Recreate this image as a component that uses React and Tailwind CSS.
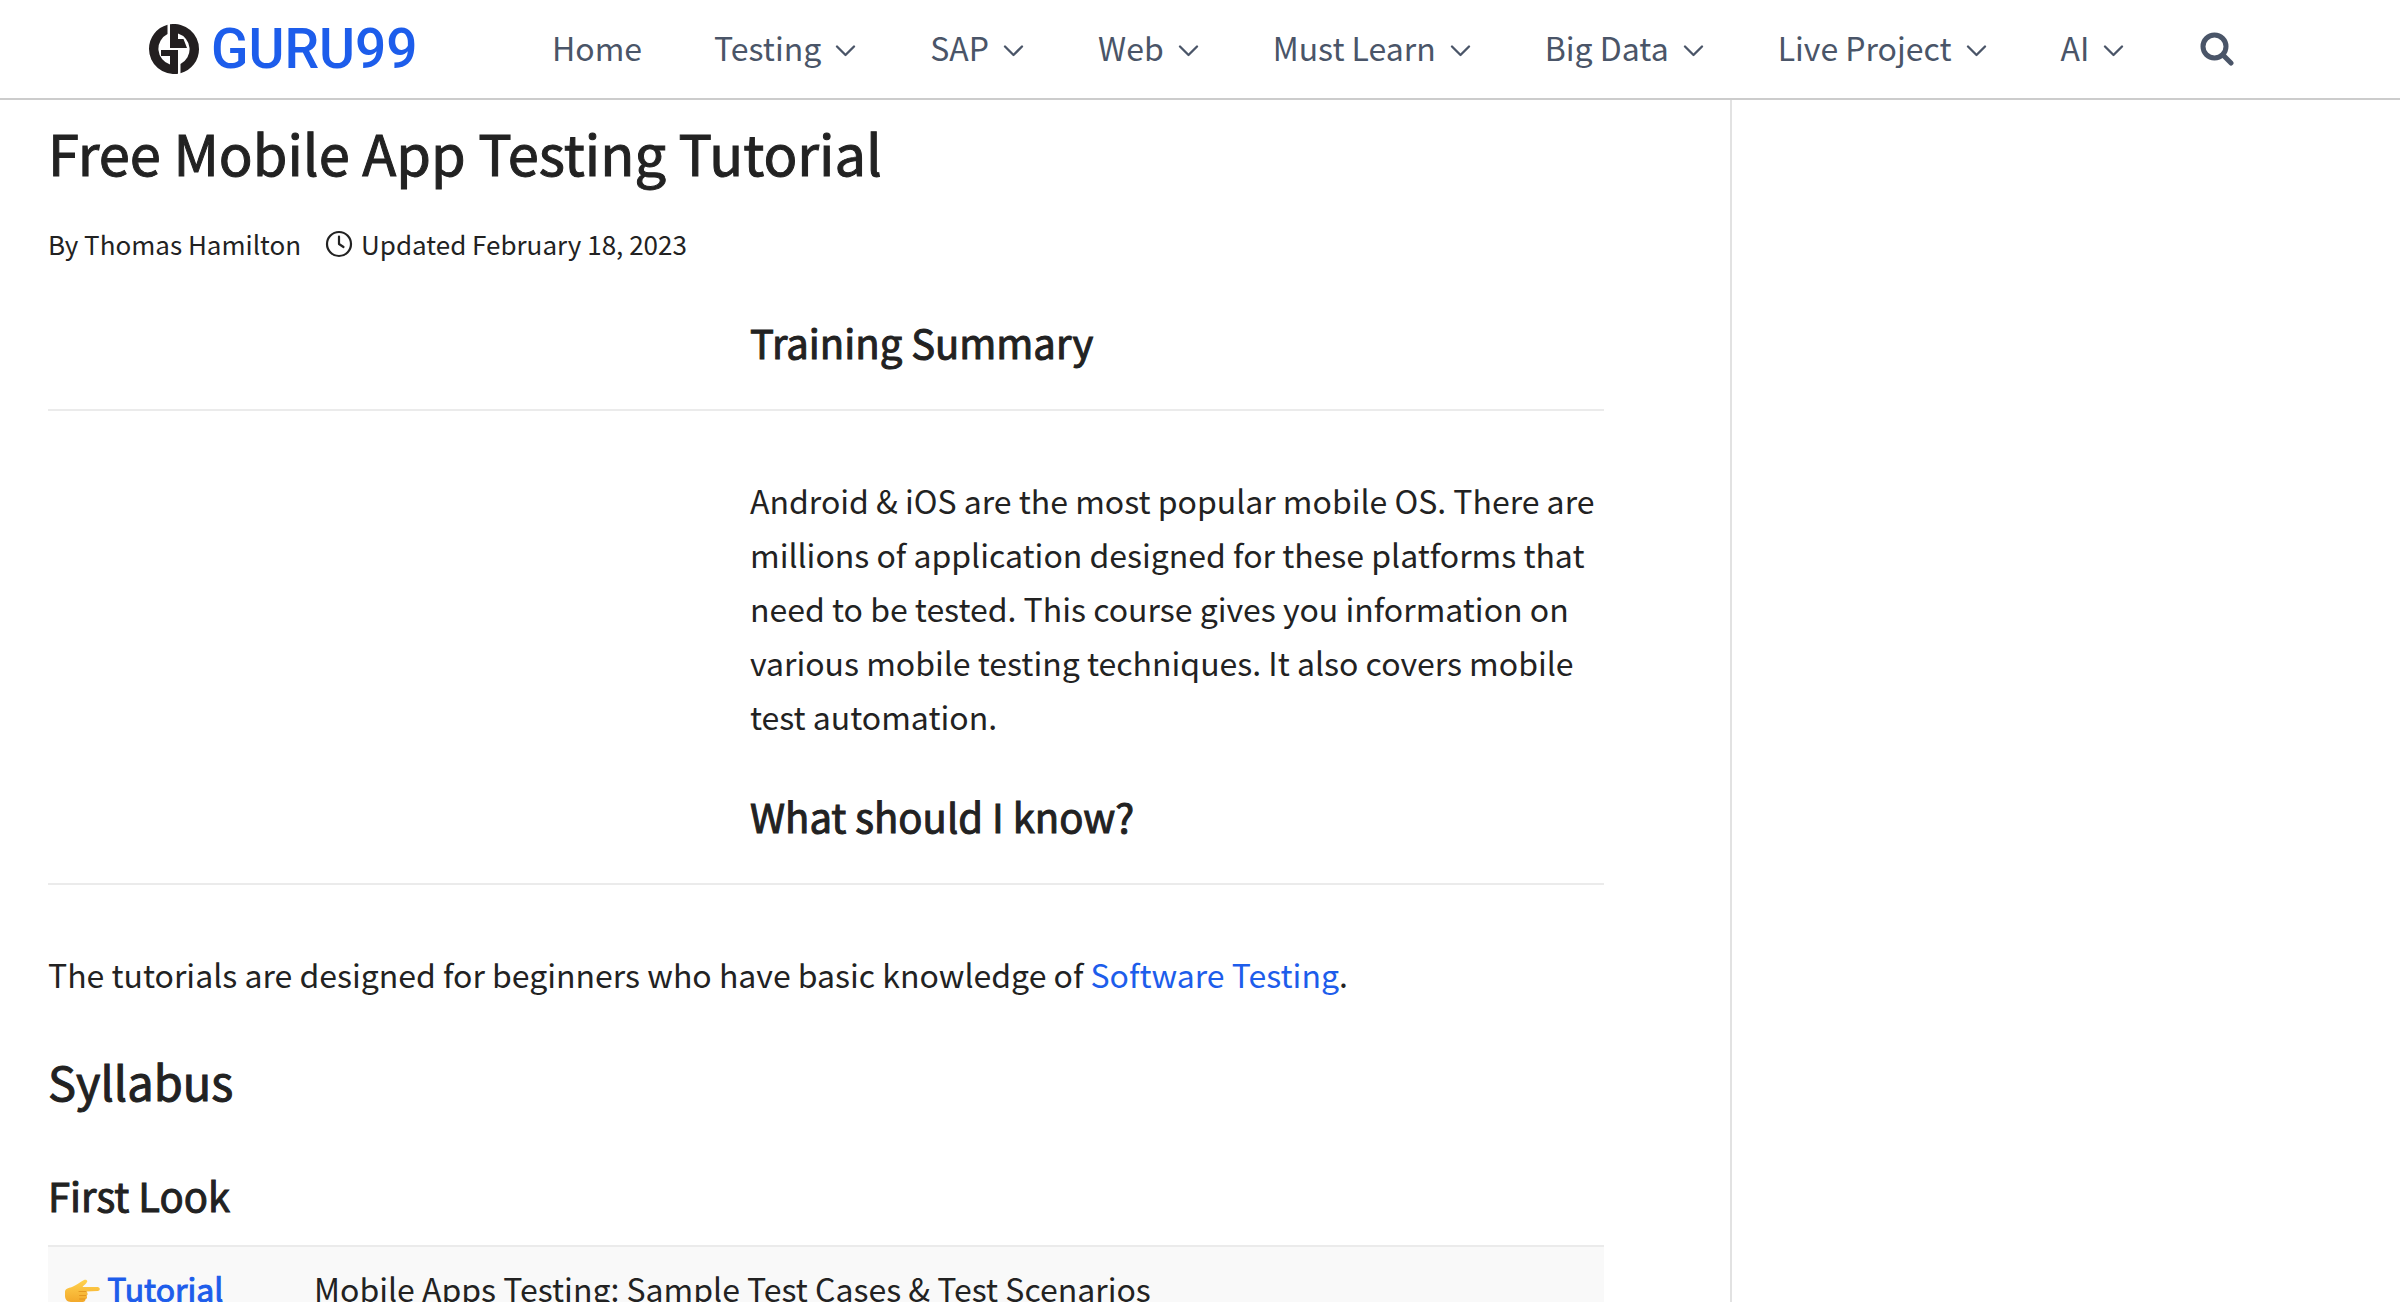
import React from "react";

const navItems = [
  { label: "Home", menu: false },
  { label: "Testing", menu: true },
  { label: "SAP", menu: true },
  { label: "Web", menu: true },
  { label: "Must Learn", menu: true },
  { label: "Big Data", menu: true },
  { label: "Live Project", menu: true },
  { label: "AI", menu: true },
];

function LogoMark() {
  return (
    <svg viewBox="0 0 50 50" className="size-[50px]" aria-hidden="true">
      <path fill="#231f20" d="M29 49.700A25 25 0 0 1 0 25A25 25 0 0 1 18.500 0.800V10A16.500 16.500 0 0 0 21 40.500V32H12V26H29Z" />
      <path fill="#231f20" d="M21 0.300A25 25 0 0 1 50 25A25 25 0 0 1 31.500 49.200V40A16.500 16.500 0 0 0 29 9.500V15H34.500L38 24H21Z" />
    </svg>
  );
}

function Chevron() {
  return (
    <svg viewBox="0 0 25 12" className="mt-2 h-3 w-[25px]" fill="none" stroke="currentColor" strokeWidth="2.300" strokeLinecap="round" strokeLinejoin="round" aria-hidden="true">
      <path d="M4 1.500l8.500 8.500L21 1.500" />
    </svg>
  );
}

function SearchIcon() {
  return (
    <svg viewBox="0 0 34 34" className="size-[34px]" fill="none" stroke="currentColor" aria-hidden="true">
      <circle cx="14.500" cy="14.500" r="11.500" strokeWidth="5" />
      <path d="M23 23l8 8" strokeWidth="5" strokeLinecap="round" />
    </svg>
  );
}

function ClockIcon() {
  return (
    <svg viewBox="0 0 28 28" className="size-7" fill="none" stroke="currentColor" strokeWidth="2.200" strokeLinecap="round" strokeLinejoin="round" aria-hidden="true">
      <circle cx="14" cy="14" r="12" />
      <path d="M14 6.500V14l4.500 3" />
    </svg>
  );
}

function PointingHand() {
  return (
    <svg viewBox="0 0 36 24" className="inline-block h-6 w-9 align-[-1px]" aria-hidden="true">
      <defs>
        <linearGradient id="skin" x1="0" y1="0" x2="0" y2="1">
          <stop offset="0" stopColor="#ffd34f" />
          <stop offset="1" stopColor="#f3a92b" />
        </linearGradient>
      </defs>
      <path fill="url(#skin)" d="M1 13C1 10 4 9 8 8C12 6.500 16 3 20 1C22 0 24 1.500 23 3C22 5 19.500 6.500 18.500 8H33.500C36.500 8 36.500 12 33.500 12L22.500 12.500C24 14 24 16 22.500 16.500C23.500 18 23 20 21.500 20C21.500 22.500 20 23 17 23H7C3 23 1 20 1 17Z" />
      <path fill="none" stroke="#df8f1b" strokeWidth="0.800" strokeLinecap="round" d="M15 12.500H22M15.500 16.500H22M15.500 20H21" />
    </svg>
  );
}

export default function App() {
  const heading = "font-normal [-webkit-text-stroke:1px_#222222]";
  return (
    <div className="flex h-screen flex-col overflow-hidden bg-white font-['Noto_Sans_CJK_SC',sans-serif] text-[32px] leading-[54px] text-[#222222]">
      <header className="flex h-[100px] shrink-0 items-center border-b-2 border-[#cccccc] pl-[149px] text-[#4a5568]">
        <a href="#" className="flex items-center gap-3 text-[#1d5deb]">
          <LogoMark />
          <span className="w-[208px] font-['Roboto',sans-serif] text-[55px] font-medium">GURU99</span>
        </a>
        <nav className="mb-1 ml-[133px] flex items-center gap-[72px]">
          {navItems.map((item) => (
            <a key={item.label} href="#" className="flex items-center gap-3 whitespace-nowrap">
              {item.label}
              {item.menu && <Chevron />}
            </a>
          ))}
        </nav>
        <button type="button" aria-label="Search" className="ml-[74px]">
          <SearchIcon />
        </button>
      </header>

      <div className="flex min-h-0 grow">
        <main className="w-[1732px] shrink-0 border-r-2 border-[#e2e2e2] pr-[126px] pl-12">
          <h1 className={`mt-3 text-[56px] leading-[80px] ${heading}`}>Free Mobile App Testing Tutorial</h1>
          <div className="mt-7 flex items-center text-[26px] leading-[48px]">
            <span>By Thomas Hamilton</span>
            <span className="ml-6 flex items-center gap-2">
              <ClockIcon />
              Updated February 18, 2023
            </span>
          </div>
          <section>
            <h3 className={`mt-11 border-b-2 border-[#ebebeb] pb-[37px] pl-[702px] text-[40px] leading-[60px] ${heading}`}>Training Summary</h3>
            <p className="mt-[62px] pl-[702px]">
              Android &amp; iOS are the most popular mobile OS. There are millions of application designed for these platforms that need to be tested. This course gives you information on various mobile testing techniques. It also covers mobile test automation.
            </p>
            <h3 className={`mt-[43px] border-b-2 border-[#ebebeb] pb-[37px] pl-[702px] text-[40px] leading-[60px] ${heading}`}>What should I know?</h3>
            <p className="mt-[62px]">
              The tutorials are designed for beginners who have basic knowledge of <a href="#" className="text-[#1d5deb]">Software Testing</a>.
            </p>
          </section>
          <h2 className={`mt-11 text-[47px] leading-[72px] ${heading}`}>Syllabus</h2>
          <h3 className={`mt-12 text-[40px] leading-[60px] ${heading}`}>First Look</h3>
          <table className="mt-5 w-full border-t-2 border-[#ebebeb] bg-[#f9f9f9] text-left">
            <tbody>
              <tr>
                <td className="w-[250px] py-3.5 pl-4">
                  <PointingHand /> <a href="#" className="text-[#1d5deb] [-webkit-text-stroke:1px_#1d5deb]">Tutorial</a>
                </td>
                <td className="py-3.5 pl-4">Mobile Apps Testing: Sample Test Cases &amp; Test Scenarios</td>
              </tr>
            </tbody>
          </table>
        </main>
        <aside className="grow" />
      </div>
    </div>
  );
}
